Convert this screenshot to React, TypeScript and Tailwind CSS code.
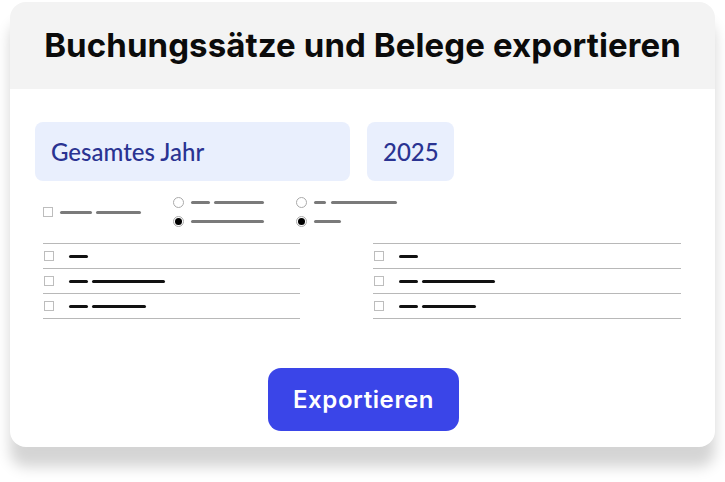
import React from "react";

type Row = number[];

function Dash({ w, dark = false }: { w: number; dark?: boolean }) {
  return (
    <span
      className={`block h-[3px] rounded-full ${dark ? "bg-[#111]" : "bg-[#7a7a7a]"}`}
      style={{ width: w }}
    />
  );
}

function Box() {
  return <span className="block h-[10px] w-[10px] shrink-0 border border-[#bdbdbd] bg-white" />;
}

function Radio({ checked }: { checked?: boolean }) {
  return (
    <span className="flex h-[11px] w-[11px] shrink-0 items-center justify-center rounded-full border border-[#aaa] bg-white">
      {checked && <span className="block h-[7px] w-[7px] rounded-full bg-black" />}
    </span>
  );
}

function OptionList({ rows, width }: { rows: Row[]; width: number }) {
  return (
    <div className="border-t border-[#b8b8b8]" style={{ width }}>
      {rows.map((parts, i) => (
        <div key={i} className="flex h-[25px] items-center border-b border-[#b8b8b8] pl-[1px]">
          <Box />
          <div className="ml-[15px] flex gap-[4px]">
            {parts.map((w, j) => (
              <Dash key={j} w={w} dark />
            ))}
          </div>
        </div>
      ))}
    </div>
  );
}

export default function App() {
  const listRows: Row[] = [[19], [19, 73], [19, 54]];

  return (
    <div className="h-[482px] w-[725px] overflow-hidden bg-white px-[10px] pt-[2px] font-['Inter',sans-serif]">
      <div className="h-[445px] w-[705px] overflow-hidden rounded-[16px] bg-white shadow-[0_20px_14px_rgba(0,0,0,0.17)]">
        <div className="flex h-[87px] items-center justify-center bg-[#f3f3f3]">
          <h1 className="text-[33px] font-bold tracking-[0.1px] text-[#0b0b0b]">
            Buchungssätze und Belege exportieren
          </h1>
        </div>

        <div className="px-[25px] pt-[33px]">
          <div className="flex gap-[17px] font-['Lato',sans-serif] text-[24px] font-medium text-[#2a3392]">
            <div className="flex h-[59px] w-[315px] items-center rounded-[8px] bg-[#e9effd] pl-[16px]">
              Gesamtes Jahr
            </div>
            <div className="flex h-[59px] w-[87px] items-center rounded-[8px] bg-[#e9effd] pl-[16px]">
              2025
            </div>
          </div>

          <div className="mt-[16px] flex items-center pl-[8px]">
            <div className="flex items-center gap-[7px]">
              <Box />
              <div className="flex gap-[4px]">
                <Dash w={32} />
                <Dash w={45} />
              </div>
            </div>
            <div className="ml-[32px] flex flex-col gap-[8px]">
              <div className="flex items-center gap-[7px]">
                <Radio />
                <div className="flex gap-[4px]">
                  <Dash w={19} />
                  <Dash w={50} />
                </div>
              </div>
              <div className="flex items-center gap-[7px]">
                <Radio checked />
                <Dash w={73} />
              </div>
            </div>
            <div className="ml-[32px] flex flex-col gap-[8px]">
              <div className="flex items-center gap-[7px]">
                <Radio />
                <div className="flex gap-[5px]">
                  <Dash w={12} />
                  <Dash w={66} />
                </div>
              </div>
              <div className="flex items-center gap-[7px]">
                <Radio checked />
                <Dash w={27} />
              </div>
            </div>
          </div>

          <div className="mt-[16px] flex gap-[73px] pl-[8px]">
            <OptionList rows={listRows} width={257} />
            <OptionList rows={listRows} width={308} />
          </div>

          <div className="mt-[49px] flex justify-center pl-[2px]">
            <button className="flex h-[63px] w-[191px] items-center justify-center rounded-[13px] bg-[#3a45e8] text-[24px] font-semibold tracking-[0.6px] text-white">
              Exportieren
            </button>
          </div>
        </div>
      </div>
    </div>
  );
}
